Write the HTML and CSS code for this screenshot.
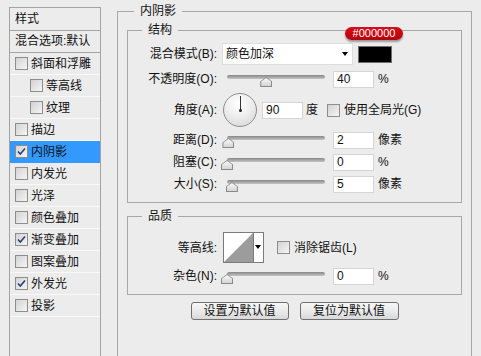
FILE: index.html
```html
<!DOCTYPE html>
<html>
<head>
  <meta charset="utf-8">
  <link rel="stylesheet" href="styles.css">
</head>
<body>
  <div class="styles-panel">
    <div class="panel-head">样式</div>
    <div class="panel-blend">混合选项:默认</div>
    <div class="panel-item"><span class="check"></span>斜面和浮雕</div>
    <div class="panel-item sub"><span class="check"></span>等高线</div>
    <div class="panel-item sub"><span class="check"></span>纹理</div>
    <div class="panel-item"><span class="check"></span>描边</div>
    <div class="panel-item active"><span class="check"><svg viewBox="0 0 11 11"><path d="M2 5.5 L4.3 8 L9 2.5"/></svg></span>内阴影</div>
    <div class="panel-item"><span class="check"></span>内发光</div>
    <div class="panel-item"><span class="check"></span>光泽</div>
    <div class="panel-item"><span class="check"></span>颜色叠加</div>
    <div class="panel-item"><span class="check"><svg viewBox="0 0 11 11"><path d="M2 5.5 L4.3 8 L9 2.5"/></svg></span>渐变叠加</div>
    <div class="panel-item"><span class="check"></span>图案叠加</div>
    <div class="panel-item"><span class="check"><svg viewBox="0 0 11 11"><path d="M2 5.5 L4.3 8 L9 2.5"/></svg></span>外发光</div>
    <div class="panel-item"><span class="check"></span>投影</div>
  </div>

  <fieldset class="group outer">
    <legend>内阴影</legend>

    <fieldset class="group inner">
      <legend>结构</legend>
      <div class="row row-blend">
        <span class="lbl">混合模式(B):</span>
        <div class="select">颜色加深<span class="caret"></span></div>
        <span class="swatch"><span class="badge">#000000</span></span>
      </div>
      <div class="row row-slider first">
        <span class="lbl">不透明度(O):</span>
        <div class="slider"><div class="track"><span class="thumb" style="left: 40%"></span></div></div>
        <span class="num">40</span>
        <span class="unit">%</span>
      </div>
      <div class="row row-angle">
        <span class="lbl">角度(A):</span>
        <span class="dial"></span>
        <span class="num angle-num">90</span>
        <span class="unit deg">度</span>
        <span class="check global"></span>
        <span class="check-text">使用全局光(G)</span>
      </div>
      <div class="row row-slider">
        <span class="lbl">距离(D):</span>
        <div class="slider"><div class="track"><span class="thumb" style="left: 1.5%"></span></div></div>
        <span class="num">2</span>
        <span class="unit">像素</span>
      </div>
      <div class="row row-slider">
        <span class="lbl">阻塞(C):</span>
        <div class="slider"><div class="track"><span class="thumb" style="left: 0%"></span></div></div>
        <span class="num">0</span>
        <span class="unit">%</span>
      </div>
      <div class="row row-slider">
        <span class="lbl">大小(S):</span>
        <div class="slider"><div class="track"><span class="thumb" style="left: 5%"></span></div></div>
        <span class="num">5</span>
        <span class="unit">像素</span>
      </div>
    </fieldset>

    <fieldset class="group inner quality">
      <legend>品质</legend>
      <div class="row row-contour">
        <span class="lbl">等高线:</span>
        <div class="contour">
          <svg class="curve" viewBox="0 0 29 29"><polygon points="0,29 29,0 29,29"/></svg>
          <span class="contour-drop"><span class="caret"></span></span>
        </div>
        <span class="check aa"></span>
        <span class="check-text">消除锯齿(L)</span>
      </div>
      <div class="row row-slider">
        <span class="lbl">杂色(N):</span>
        <div class="slider"><div class="track"><span class="thumb" style="left: 0%"></span></div></div>
        <span class="num">0</span>
        <span class="unit">%</span>
      </div>
    </fieldset>

    <div class="actions">
      <button class="btn">设置为默认值</button>
      <button class="btn wide">复位为默认值</button>
    </div>
  </fieldset>
</body>
</html>
```

FILE: styles.css
```css
* {
  box-sizing: border-box;
}

body {
  margin: 0;
  width: 481px;
  height: 356px;
  overflow: hidden;
  display: flex;
  align-items: flex-start;
  background: #ececec;
  color: #111;
  font-family: "Liberation Sans", "Noto Sans CJK SC", sans-serif;
  font-size: 12px;
  line-height: 16px;
}

/* left styles list, runs off the bottom of the dialog crop */
.styles-panel {
  flex-shrink: 0;
  width: 92px;
  height: 349px;
  margin: 7px 0 0 9px;
  border: 1px solid #a3a3a3;
  border-bottom: none;
}

.panel-head {
  height: 23px;
  line-height: 22px;
  padding-left: 5px;
  border-bottom: 1px solid #a3a3a3;
}

.panel-blend {
  height: 22px;
  line-height: 21px;
  padding-left: 5px;
  border-bottom: 1px solid #a3a3a3;
}

.panel-item {
  height: 22px;
  display: flex;
  align-items: center;
  gap: 3px;
  padding-left: 5px;
  border-bottom: 1px solid #f8f8f8;
}

.panel-item.sub {
  padding-left: 20px;
}

.panel-item.active {
  background: #3399ff;
  border-bottom-color: #3399ff;
}

.check {
  flex-shrink: 0;
  display: flex;
  width: 13px;
  height: 13px;
  border: 1px solid #8d8d8d;
  background: linear-gradient(135deg, #d2d2d2 0%, #f5f5f5 100%);
}

.check svg {
  width: 11px;
  height: 11px;
}

.check path {
  fill: none;
  stroke: #2b3f7c;
  stroke-width: 1.6;
}

/* group boxes */
.group {
  min-width: 0;
  margin: 0;
  padding: 0;
  border: 1px solid #a8a8a8;
}

.group legend {
  padding: 0 6px;
  line-height: 18px;
}

.outer {
  flex-shrink: 0;
  width: 355px;
  height: 354px;
  margin: 2px 0 0 16px;
  padding: 0 9px;
  border-bottom: none;
}

.outer > legend {
  margin-left: 7px;
}

.inner {
  margin-top: 1px;
  padding: 0 0 9px;
}

.inner > legend {
  margin-left: 14px;
}

.quality {
  margin-top: 4px;
}

/* rows */
.row {
  display: flex;
  align-items: center;
  margin-top: 4px;
}

.lbl {
  flex-shrink: 0;
  width: 89px;
  margin-right: 5px;
  text-align: right;
  white-space: nowrap;
}

.row-blend {
  height: 22px;
}

.row-slider {
  height: 18px;
}

.row-slider.first {
  height: 20px;
}

.row-angle {
  height: 34px;
}

.row-contour {
  height: 31px;
  margin-top: 7px;
}

.select {
  position: relative;
  display: flex;
  align-items: center;
  width: 131px;
  height: 22px;
  padding-left: 3px;
  background: #fff;
  border: 1px solid #dedede;
}

.caret {
  position: absolute;
  right: 4px;
  top: 8px;
  width: 0;
  height: 0;
  border-left: 3.5px solid transparent;
  border-right: 3.5px solid transparent;
  border-top: 4px solid #000;
}

.swatch {
  position: relative;
  width: 34px;
  height: 17px;
  margin-left: 5px;
  background: #000;
  border: 1px solid #6e6e6e;
}

.badge {
  position: absolute;
  left: -14px;
  top: -20px;
  width: 58px;
  height: 13px;
  border-radius: 7px;
  background: linear-gradient(#d80f18, #b5000a);
  color: #fff;
  font-size: 11px;
  line-height: 13px;
  text-align: center;
  box-shadow: 0 2px 2px rgba(0, 0, 0, 0.35);
}

/* sliders */
.slider {
  position: relative;
  flex-shrink: 0;
  width: 108px;
  height: 12px;
}

.track {
  position: absolute;
  left: 5px;
  right: 5px;
  top: 2px;
  height: 4px;
  border-radius: 2px;
  background: linear-gradient(#878787, #c4c4c4);
}

.thumb {
  position: absolute;
  top: 2px;
  width: 12px;
  height: 10px;
  transform: translateX(-50%);
  background: #8a8a8a;
  clip-path: polygon(50% 0, 100% 45%, 100% 100%, 0 100%, 0 45%);
}

.thumb::before {
  content: '';
  position: absolute;
  inset: 1px;
  background: linear-gradient(#fafafa, #d4d4d4);
  clip-path: polygon(50% 0, 100% 45%, 100% 100%, 0 100%, 0 45%);
}

.num {
  flex-shrink: 0;
  width: 41px;
  height: 17px;
  margin-left: 3px;
  padding-left: 3px;
  line-height: 15px;
  background: #fff;
  border: 1px solid #d5d5d5;
}

.unit {
  margin-left: 4px;
}

/* angle */
.dial {
  position: relative;
  flex-shrink: 0;
  width: 34px;
  height: 34px;
  margin-left: 1px;
  border-radius: 50%;
  border: 1px solid #8e8e8e;
  background: radial-gradient(circle at 45% 30%, #ffffff 0%, #eeeeee 45%, #d2d2d2 100%);
}

.dial::before {
  content: '';
  position: absolute;
  left: 15.5px;
  top: 2px;
  width: 1px;
  height: 14px;
  background: #333;
}

.dial::after {
  content: '';
  position: absolute;
  left: 14.5px;
  top: 14.5px;
  width: 3px;
  height: 3px;
  border-radius: 50%;
  background: #222;
}

.angle-num {
  margin-left: 5px;
}

.deg {
  margin-left: 3px;
}

.global {
  margin-left: 9px;
}

.check-text {
  margin-left: 4px;
  white-space: nowrap;
}

/* contour */
.contour {
  display: flex;
  flex-shrink: 0;
  width: 41px;
  height: 31px;
  margin-left: 1px;
  background: #fff;
  border: 1px solid #7a7a7a;
}

.curve {
  width: 29px;
  height: 29px;
}

.curve polygon {
  fill: #9c9c9c;
}

.contour-drop {
  position: relative;
  flex: 1;
  border-left: 1px solid #7a7a7a;
}

.contour-drop .caret {
  right: 2px;
  top: 12px;
}

.aa {
  margin-left: 13px;
}

/* buttons */
.actions {
  display: flex;
  justify-content: center;
  gap: 11px;
  margin-top: 7px;
}

.btn {
  width: 98px;
  height: 18px;
  padding: 0;
  border: 1px solid #707070;
  border-radius: 3px;
  background: linear-gradient(#f7f7f7 0%, #ebebeb 50%, #d8d8d8 100%);
  color: #111;
  font-family: inherit;
  font-size: 12px;
  line-height: 16px;
}

.btn.wide {
  width: 99px;
}
```
